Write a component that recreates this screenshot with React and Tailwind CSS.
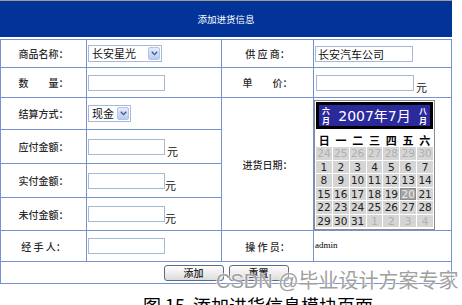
import React from 'react';

const cjk = "font-['SimSun','Noto_Sans_CJK_SC',sans-serif]";

const Label = ({ children, className = '' }) => (
  <div className={`bg-white flex items-center justify-center whitespace-pre text-[10px] font-medium text-[#2a2a2a] ${className}`}>
    {children}
  </div>
);

const Box = ({ w = 'w-[77px]', children }) => (
  <div className={`${w} h-[16px] border border-[#a6b9d8] bg-white text-[11px] text-[#111] leading-[14px] pl-[2px] overflow-hidden`}>
    {children}
  </div>
);

const Select = ({ w, value }) => (
  <div className={`${w} h-[17px] border border-[#a6b9d8] bg-white flex items-center justify-between`}>
    <span className="text-[11px] text-[#111] pl-[3px] leading-none">{value}</span>
    <span className="w-[12px] h-[13px] mr-px rounded-[2px] border border-[#b4c4e6] bg-gradient-to-b from-[#e4ebfb] to-[#b9cbef] flex items-center justify-center">
      <svg width="7" height="5" viewBox="0 0 7 5">
        <path d="M0.8 0.8 L3.5 3.6 L6.2 0.8" fill="none" stroke="#3c5489" strokeWidth="1.3" />
      </svg>
    </span>
  </div>
);

const WithYuan = ({ w, gap = 'ml-[2px]' }) => (
  <div className="flex items-end">
    <Box w={w} />
    <span className={`text-[11px] text-[#111] ${gap} leading-none translate-y-[2px]`}>元</span>
  </div>
);

const days = [
  ...[24, 25, 26, 27, 28, 29, 30].map((d) => ({ d, out: true })),
  ...Array.from({ length: 31 }, (_, i) => ({ d: i + 1 })),
  ...[1, 2, 3, 4].map((d) => ({ d, out: true })),
];

const Calendar = () => (
  <div className="w-[121px] h-[130px] border border-[#8c8c8c] bg-white flex flex-col">
    <div className="mx-px mt-px h-[27px] border-[3px] border-black bg-[#2b2a9c] flex items-center justify-between px-[3px] text-white">
      <div className="flex flex-col text-[8px] leading-[10px] font-bold">
        <span>六</span>
        <span>月</span>
      </div>
      <div className="text-[14px] leading-none font-['DejaVu_Sans','Noto_Sans_CJK_SC',sans-serif]">2007年7月</div>
      <div className="flex flex-col text-[8px] leading-[10px] font-bold">
        <span>八</span>
        <span>月</span>
      </div>
    </div>
    <div className="grid grid-cols-7 h-[15px] mt-[3px] px-px text-[11px] font-bold text-black">
      {['日', '一', '二', '三', '四', '五', '六'].map((w) => (
        <div key={w} className="flex items-center justify-center">{w}</div>
      ))}
    </div>
    <div className="grid grid-cols-7 auto-rows-[12.5px] gap-px px-px font-['DejaVu_Sans',sans-serif] text-[10.5px]">
      {days.map((x, i) => (
        <div
          key={i}
          className={`flex items-center justify-center leading-none ${
            x.d === 20 && !x.out
              ? 'bg-[#a4a4a4] text-[#ececec] border border-[#8e8e8e]'
              : 'bg-[#d5d5d5] ' + (x.out ? 'text-[#b0b0b0]' : 'text-[#222]')
          }`}
        >
          {x.d}
        </div>
      ))}
    </div>
  </div>
);

const Button = ({ children }) => (
  <div className="w-[60px] h-[16px] rounded-[3px] border border-[#5c6c84] bg-gradient-to-b from-white to-[#dcdcdc] flex items-center justify-center text-[10px] font-medium text-[#222] leading-none">
    {children}
  </div>
);

export default function App() {
  return (
    <div className={`relative w-[462px] h-[305px] bg-white overflow-hidden ${cjk}`}>
      <div className="w-[452px] h-[37px] border-t border-[#a39a86] bg-[#023399] flex items-center justify-center text-white text-[9.5px]">
        添加进货信息
      </div>
      <div className="mt-[2px] w-[452px] grid grid-cols-[85px_134px_91px_137px] grid-rows-[27px_29px_31px_33px_33px_32px_30px_21px] gap-px p-px bg-[#7591d1]">
        <Label>商品名称：</Label>
        <div className="bg-white flex items-center pl-px">
          <Select w="w-[74px]" value="长安星光" />
        </div>
        <Label>供 应 商：</Label>
        <div className="bg-white flex items-center pl-px">
          <Box w="w-[98px]">长安汽车公司</Box>
        </div>

        <Label>数　　量：</Label>
        <div className="bg-white flex items-center pl-px">
          <Box />
        </div>
        <Label>单　　价：</Label>
        <div className="bg-white flex items-center pl-[2px]">
          <WithYuan w="w-[98px]" />
        </div>

        <Label>结算方式：</Label>
        <div className="bg-white flex items-center pl-px">
          <Select w="w-[43px]" value="现金" />
        </div>
        <Label className="row-span-4">进货日期：</Label>
        <div className="row-span-4 bg-white flex items-end">
          <Calendar />
        </div>

        <Label>应付金额：</Label>
        <div className="bg-white flex items-center pl-px">
          <WithYuan />
        </div>

        <Label>实付金额：</Label>
        <div className="bg-white flex items-center pl-px">
          <WithYuan gap="ml-0" />
        </div>

        <Label>未付金额：</Label>
        <div className="bg-white flex items-center pl-px">
          <WithYuan gap="ml-0" />
        </div>

        <Label>经 手 人：</Label>
        <div className="bg-white flex items-center pl-px">
          <Box />
        </div>
        <Label>操 作 员：</Label>
        <div className="bg-white flex items-center pl-px text-[9px] text-black font-['Liberation_Serif',serif]">
          admin
        </div>

        <div className="col-span-4 bg-white flex items-center justify-center gap-[5px]">
          <Button>添加</Button>
          <Button>重置</Button>
        </div>
      </div>
      <div className="mt-[10px] pl-[143px] text-[18px] leading-[22px] text-black whitespace-pre">
        图 15  添加进货信息模块页面
      </div>
      <div className="absolute left-[216px] top-[268px] text-[20px] leading-[26px] text-[#a0a0a0] font-['Liberation_Sans','Noto_Sans_CJK_SC',sans-serif] [text-shadow:0_0_2px_#fff,0_0_2px_#fff]">
        CSDN @毕业设计方案专家
      </div>
    </div>
  );
}
